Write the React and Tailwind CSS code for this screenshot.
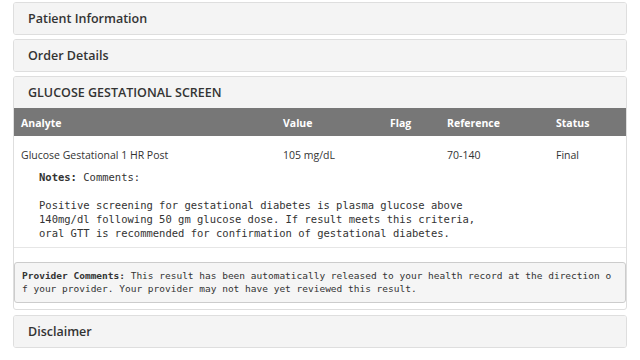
import React from "react";

const sans = { fontFamily: '"Open Sans", "Liberation Sans", sans-serif' };
const mono = { fontFamily: '"DejaVu Sans Mono", "Liberation Mono", monospace' };

// ─── Collapsed section header
const Panel = ({ title, children }) => (
  <div className="border border-[#dedede] rounded-[3px] overflow-hidden bg-white">
    <div className="h-[31px] pt-[2px] bg-[#f4f4f4] flex items-center px-[14px] text-[12.5px] font-semibold text-[#333]">
      {title}
    </div>
    {children}
  </div>
);

const cols = "grid grid-cols-[262px_107px_57px_109px_1fr]";

const noteLines = [
  "Comments:",
  "",
  "Positive screening for gestational diabetes is plasma glucose above",
  "140mg/dl following 50 gm glucose dose. If result meets this criteria,",
  "oral GTT is recommended for confirmation of gestational diabetes.",
];

export default function App() {
  return (
    <div className="w-[640px] h-[360px] bg-white px-[13px] pt-[2px] flex flex-col gap-[4px]" style={sans}>
      <Panel title="Patient Information" />
      <Panel title="Order Details" />
      <Panel title="GLUCOSE GESTATIONAL SCREEN">
        <div className={`${cols} h-[28px] pt-[3px] items-center bg-[#777777] text-white text-[10.5px] font-bold`}>
          <div className="pl-[7px]">Analyte</div>
          <div className="pl-[7px]">Value</div>
          <div className="pl-[7px]">Flag</div>
          <div className="pl-[7px]">Reference</div>
          <div className="pl-[7px]">Status</div>
        </div>
        <div className={`${cols} pt-[12px] text-[10.5px] leading-[15px] text-[#333]`}>
          <div className="pl-[7px]">Glucose Gestational 1 HR Post</div>
          <div className="pl-[7px]">105 mg/dL</div>
          <div className="pl-[7px]"></div>
          <div className="pl-[7px]">70-140</div>
          <div className="pl-[7px]">Final</div>
        </div>
        <div className="pl-[25px] pt-[7px] pb-[7px] border-b border-[#e6e6e6] text-[10.5px] leading-[14px] text-[#333] whitespace-pre" style={mono}>
          {noteLines.map((line, i) => (
            <div key={i} className="h-[14px]">
              {i === 0 && <span className="font-bold">Notes: </span>}
              {line}
            </div>
          ))}
        </div>
        <div className="pt-[14px] pb-[6px]">
          <div className="bg-[#f5f5f5] border border-[#cccccc] rounded-[3px] pl-[7px] pt-[6px] pb-[7px] text-[9.5px] leading-[13px] text-[#333] whitespace-pre" style={mono}>
            <div>
              <span className="font-bold">Provider Comments:</span> This result has been automatically released to your health record at the direction o
            </div>
            <div>f your provider. Your provider may not have yet reviewed this result.</div>
          </div>
        </div>
      </Panel>
      <div className="mt-[1px]">
        <Panel title="Disclaimer" />
      </div>
    </div>
  );
}
